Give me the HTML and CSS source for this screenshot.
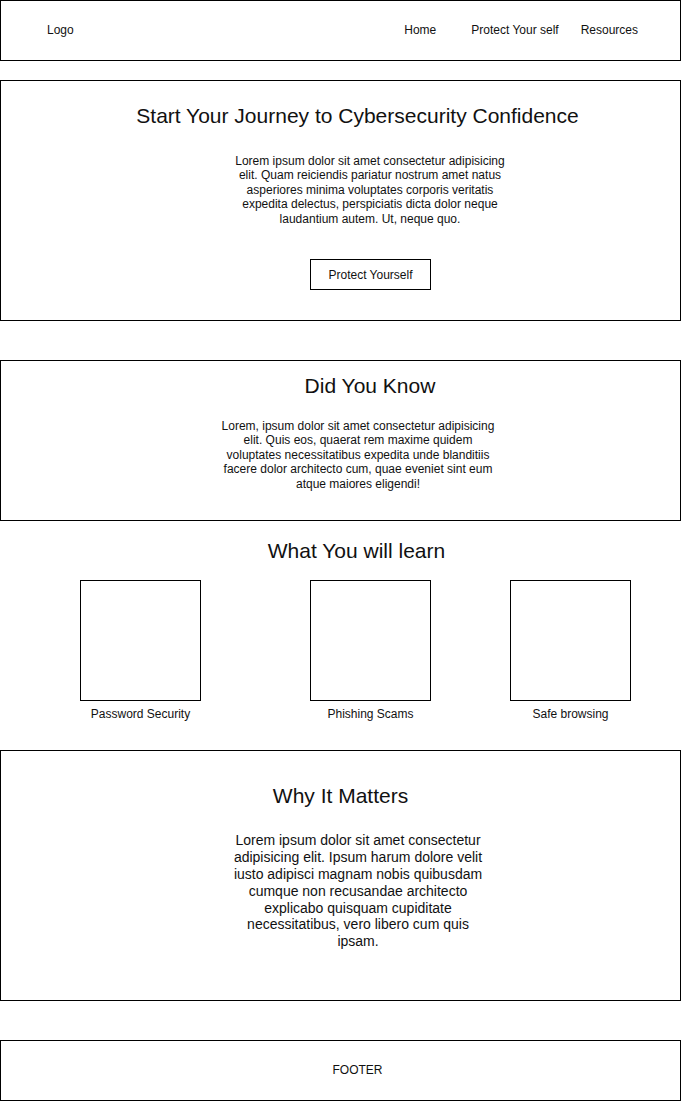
FILE: index.html
```html
<!DOCTYPE html>
<html>
  <head>
    <title>Cybersecurity Basics</title>
    <link rel="stylesheet" href="styles.css">
  </head>
  <body>
    <header class="header">
      <div class="logo">Logo</div>
      <ul class="navbar">
        <li class="navitem home"><a href="#">Home</a></li>
        <li class="navitem protect"><a href="#">Protect Your self</a></li>
        <li class="navitem"><a href="#">Resources</a></li>
      </ul>
    </header>

    <section class="box hero">
      <h1 class="hero-title">Start Your Journey to Cybersecurity Confidence</h1>
      <p class="hero-text">Lorem ipsum dolor sit amet consectetur adipisicing elit. Quam reiciendis pariatur nostrum amet natus asperiores minima voluptates corporis veritatis expedita delectus, perspiciatis dicta dolor neque laudantium autem. Ut, neque quo.</p>
      <button class="hero-button">Protect Yourself</button>
    </section>

    <section class="box facts">
      <h2 class="facts-title">Did You Know</h2>
      <p class="facts-text">Lorem, ipsum dolor sit amet consectetur adipisicing elit. Quis eos, quaerat rem maxime quidem voluptates necessitatibus expedita unde blanditiis facere dolor architecto cum, quae eveniet sint eum atque maiores eligendi!</p>
    </section>

    <section class="learn">
      <h2 class="learn-title">What You will learn</h2>
      <div class="topics">
        <div class="topic first">
          <div class="topic-image"></div>
          <p class="topic-label">Password Security</p>
        </div>
        <div class="topic second">
          <div class="topic-image"></div>
          <p class="topic-label">Phishing Scams</p>
        </div>
        <div class="topic">
          <div class="topic-image"></div>
          <p class="topic-label">Safe browsing</p>
        </div>
      </div>
    </section>

    <section class="box matters">
      <h2 class="matters-title">Why It Matters</h2>
      <p class="matters-text">Lorem ipsum dolor sit amet consectetur adipisicing elit. Ipsum harum dolore velit iusto adipisci magnam nobis quibusdam cumque non recusandae architecto explicabo quisquam cupiditate necessitatibus, vero libero cum quis ipsam.</p>
    </section>

    <footer class="box footer">FOOTER</footer>
  </body>
</html>
```

FILE: styles.css
```css
* {
  box-sizing: border-box;
}

body {
  font-family: "Liberation Sans", Arial, sans-serif;
  color: #111;
  margin: 0;
  width: 681px;
}

h1, h2, p {
  margin: 0;
  font-weight: normal;
}

.box {
  border: 1px solid #000;
}

/* header */
.header {
  display: flex;
  align-items: center;
  height: 61px;
  border: 1px solid #000;
  padding: 0 42px 2px 46px;
  font-size: 12px;
}

.logo {
  flex: 1;
}

ul.navbar {
  list-style-type: none;
  margin: 0;
  padding: 0;
  display: flex;
}

li.navitem a {
  color: #111;
  text-decoration: none;
}

li.home {
  margin-right: 35px;
}

li.protect {
  margin-right: 22px;
}

/* hero */
.hero {
  margin-top: 19px;
  height: 241px;
  padding-top: 23px;
}

.hero-title {
  font-size: 21px;
  line-height: 24px;
  text-align: center;
  padding-left: 34px;
}

.hero-text {
  width: 280px;
  margin: 26px 0 0 229px;
  font-size: 12px;
  line-height: 14.4px;
  text-align: center;
}

.hero-button {
  display: block;
  width: 121px;
  height: 31px;
  margin: 33px 0 0 309px;
  padding: 0;
  background: #fff;
  border: 1px solid #000;
  font-family: inherit;
  font-size: 12px;
  color: #111;
}

/* did you know */
.facts {
  margin-top: 39px;
  height: 161px;
  padding-top: 13px;
}

.facts-title {
  font-size: 21px;
  line-height: 24px;
  text-align: center;
  padding-left: 59px;
}

.facts-text {
  width: 280px;
  margin: 21px 0 0 217px;
  font-size: 12px;
  line-height: 14.4px;
  text-align: center;
}

/* what you will learn */
.learn {
  padding-top: 18px;
}

.learn-title {
  font-size: 21px;
  line-height: 24px;
  text-align: center;
  padding-left: 32px;
}

.topics {
  display: flex;
  margin-top: 17px;
  padding-left: 80px;
}

.topic {
  width: 121px;
}

.topic.first {
  margin-right: 109px;
}

.topic.second {
  margin-right: 79px;
}

.topic-image {
  height: 121px;
  border: 1px solid #000;
}

.topic-label {
  margin: 6px -20px 0;
  font-size: 12px;
  line-height: 14.4px;
  text-align: center;
}

/* why it matters */
.matters {
  margin-top: 29px;
  height: 251px;
  padding-top: 33px;
}

.matters-title {
  font-size: 21px;
  line-height: 24px;
  text-align: center;
}

.matters-text {
  width: 260px;
  margin: 24px 0 0 227px;
  font-size: 14px;
  line-height: 16.8px;
  text-align: center;
}

/* footer */
.footer {
  margin-top: 39px;
  height: 61px;
  display: flex;
  align-items: center;
  justify-content: center;
  padding: 0 0 2px 34px;
  font-size: 12px;
}
```
